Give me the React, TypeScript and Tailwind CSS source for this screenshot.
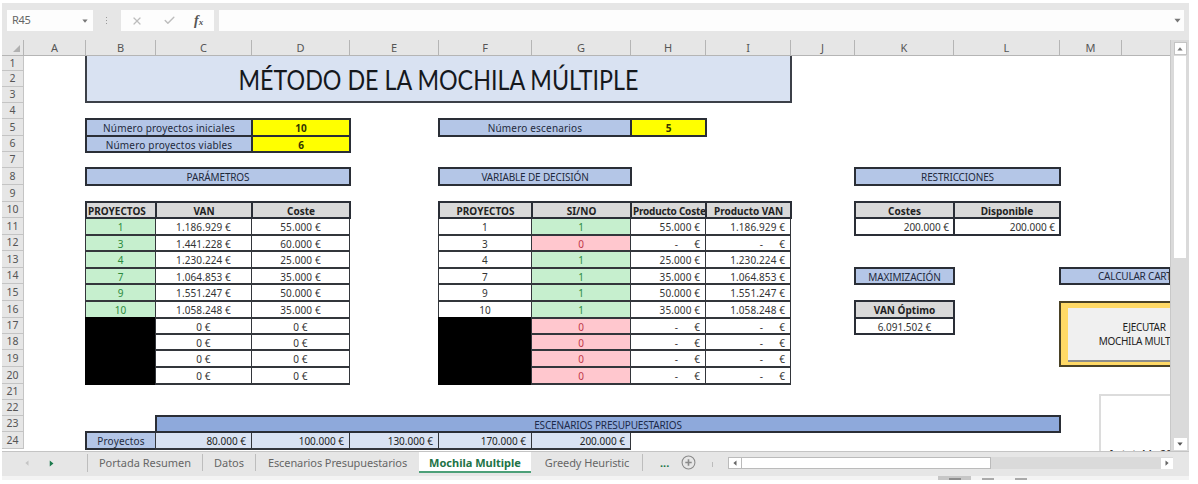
import { Check, X } from "lucide-react"
import type { ReactNode } from "react"

type Kind = "blue" | "caps" | "band" | "light" | "yellow" | "head" | "plain" | "data" | "green" | "red" | "black"

type CellData = {
  col: string
  row: number
  colSpan?: number
  kind: Kind
  text?: string
  align?: "left" | "center" | "right"
}

const thick = "outline-2 -outline-offset-1 outline-[#2a2e36]"
const thin = "-my-px -ml-px border-x border-y-2 border-[#33363b]"

const kinds: Record<Kind, string> = {
  blue: `bg-[#b4c6e7] text-[#1f2a3d] tracking-[.18px] ${thick}`,
  caps: `bg-[#b4c6e7] text-[#1f2a3d] tracking-[-.15px] ${thick}`,
  band: `bg-[#8ea9db] text-[#1c2a4a] tracking-[-.15px] ${thick}`,
  light: `bg-[#d9e2f2] text-[#222] ${thin}`,
  yellow: `bg-[#ffff00] font-bold text-[#333300] ${thick}`,
  head: `bg-[#d9d9d9] font-bold text-[#222] ${thick}`,
  plain: `bg-white text-[#333] ${thick}`,
  data: `bg-white text-[#333] tracking-[.1px] ${thin}`,
  green: `bg-[#c6efce] text-[#2c8a3c] ${thin}`,
  red: `bg-[#ffc7ce] text-[#c0384a] ${thin}`,
  black: "bg-black text-black outline-2 -outline-offset-1 outline-black",
}

const aligns = {
  left: "justify-start pl-[2px]",
  center: "justify-center",
  right: "justify-end pr-[5px]",
}

const columns = "ABCDEFGHIJKLM".split("")
const rows = Array.from({ length: 24 }, (_, i) => i + 1)

const projects = [
  ["1", "1.186.929 €", "55.000 €", "1"],
  ["3", "1.441.228 €", "60.000 €", "0"],
  ["4", "1.230.224 €", "25.000 €", "1"],
  ["7", "1.064.853 €", "35.000 €", "1"],
  ["9", "1.551.247 €", "50.000 €", "1"],
  ["10", "1.058.248 €", "35.000 €", "1"],
  ["", "0 €", "0 €", "0"],
  ["", "0 €", "0 €", "0"],
  ["", "0 €", "0 €", "0"],
  ["", "0 €", "0 €", "0"],
]

const cells: CellData[] = []

projects.forEach(([id, van, cost, chosen], i) => {
  const row = 11 + i
  cells.push(
    { col: "B", row, kind: id ? "green" : "black", text: id },
    { col: "C", row, kind: "data", text: van },
    { col: "D", row, kind: "data", text: cost },
    { col: "F", row, kind: id ? "data" : "black", text: id },
    { col: "G", row, kind: chosen === "1" ? "green" : "red", text: chosen },
    { col: "H", row, kind: "data", text: chosen === "1" ? cost : "-", align: "right" },
    { col: "I", row, kind: "data", text: chosen === "1" ? van : "-", align: "right" }
  )
})

cells.push(
  { col: "B", row: 5, colSpan: 2, kind: "blue", text: "Número proyectos iniciales" },
  { col: "D", row: 5, kind: "yellow", text: "10" },
  { col: "B", row: 6, colSpan: 2, kind: "blue", text: "Número proyectos viables" },
  { col: "D", row: 6, kind: "yellow", text: "6" },
  { col: "F", row: 5, colSpan: 2, kind: "blue", text: "Número escenarios" },
  { col: "H", row: 5, kind: "yellow", text: "5" },
  { col: "B", row: 8, colSpan: 3, kind: "caps", text: "PARÁMETROS" },
  { col: "F", row: 8, colSpan: 2, kind: "caps", text: "VARIABLE DE DECISIÓN" },
  { col: "K", row: 8, colSpan: 2, kind: "caps", text: "RESTRICCIONES" },
  { col: "B", row: 10, kind: "head", text: "PROYECTOS", align: "left" },
  { col: "C", row: 10, kind: "head", text: "VAN" },
  { col: "D", row: 10, kind: "head", text: "Coste" },
  { col: "F", row: 10, kind: "head", text: "PROYECTOS" },
  { col: "G", row: 10, kind: "head", text: "SI/NO" },
  { col: "H", row: 10, kind: "head", text: "Producto Coste", align: "left" },
  { col: "I", row: 10, kind: "head", text: "Producto VAN" },
  { col: "K", row: 10, kind: "head", text: "Costes" },
  { col: "L", row: 10, kind: "head", text: "Disponible" },
  { col: "K", row: 11, kind: "plain", text: "200.000 €", align: "right" },
  { col: "L", row: 11, kind: "plain", text: "200.000 €", align: "right" },
  { col: "K", row: 14, kind: "caps", text: "MAXIMIZACIÓN" },
  { col: "K", row: 16, kind: "head", text: "VAN Óptimo" },
  { col: "K", row: 17, kind: "plain", text: "6.091.502 €" },
  { col: "B", row: 24, kind: "blue", text: "Proyectos" },
  { col: "C", row: 24, kind: "light", text: "80.000 €", align: "right" },
  { col: "D", row: 24, kind: "light", text: "100.000 €", align: "right" },
  { col: "E", row: 24, kind: "light", text: "130.000 €", align: "right" },
  { col: "F", row: 24, kind: "light", text: "170.000 €", align: "right" },
  { col: "G", row: 24, kind: "light", text: "200.000 €", align: "right" },
  { col: "C", row: 23, colSpan: 10, kind: "band", text: "ESCENARIOS PRESUPUESTARIOS" }
)

// column 1 of the grid holds the row numbers, row 1 the column letters
function place(col: string, row: number, colSpan = 1, rowSpan = 1) {
  return {
    gridColumn: `${columns.indexOf(col) + 2} / span ${colSpan}`,
    gridRow: `${row + 1} / span ${rowSpan}`,
  }
}

function Cell({ cell }: { cell: CellData }) {
  return (
    <div
      className={`flex items-center pt-px leading-none whitespace-nowrap ${kinds[cell.kind]} ${aligns[cell.align || "center"]}`}
      style={place(cell.col, cell.row, cell.colSpan)}
    >
      {cell.text === "-" ? (
        <>
          <span className="mr-4">-</span>
          <span>€</span>
        </>
      ) : (
        <span className={cell.text === "Producto Coste" ? "tracking-[-.22px]" : ""}>{cell.text}</span>
      )}
    </div>
  )
}

function Arrow({ className }: { className: string }) {
  return (
    <svg viewBox="0 0 8 8" className={className} fill="currentColor">
      <path d="M0.5 2h7L4 6.2z" />
    </svg>
  )
}

function FormulaBar() {
  return (
    <div className="flex h-[37px] items-start pt-[7px] pl-[5px] text-[11px] text-[#666]">
      <div className="flex h-[21px] w-[86px] items-center justify-between bg-[#fdfdfd] pr-[5px] pl-[5px]">
        <span className="tracking-[-.3px]">R45</span>
        <Arrow className="size-[6px] text-[#777]" />
      </div>
      <div className="ml-[13px] flex h-[21px] flex-col justify-center gap-[2px]">
        <i className="size-px bg-[#999]" />
        <i className="size-px bg-[#999]" />
        <i className="size-px bg-[#999]" />
      </div>
      <div className="ml-[14px] flex h-[21px] w-[93px] items-center bg-[#fdfdfd] pl-[10px]">
        <X className="size-[12px] text-[#bdbdbd]" strokeWidth={2.4} />
        <Check className="ml-[20px] size-[13px] text-[#bdbdbd]" strokeWidth={2.6} />
        <span className="ml-[18px] font-['Liberation_Serif',serif] text-[14px] leading-none font-bold text-[#555] italic">
          f<span className="text-[9px]">x</span>
        </span>
      </div>
      <div className="ml-[5px] flex h-[21px] w-[965px] items-center justify-end bg-[#fdfdfd] pr-[3px]">
        <Arrow className="size-[7px] text-[#777]" />
      </div>
    </div>
  )
}

function Sheet() {
  return (
    <div className="grid h-[411px] w-[1168px] grid-cols-[22px_62px_70px_96px_98px_89px_93px_99px_75px_85px_64px_99px_106px_62px_48px] grid-rows-[16px_15px_16px_16px_16px_17px_16px_16px_17px_17px_16px_17px_16px_17px_16px_17px_17px_16px_16px_17px_17px_16px_16px_16px_17px_2px] overflow-hidden bg-white text-[10px]">
      <div className="col-start-1 row-start-1 flex items-end justify-end border-r border-b border-[#b5b5b5] bg-[#e6e6e6] pr-[3px] pb-[3px]">
        <svg viewBox="0 0 8 8" className="size-[7px] text-[#b0b0b0]" fill="currentColor">
          <path d="M8 0v8H0z" />
        </svg>
      </div>
      {columns.map((c) => (
        <div
          key={c}
          className="flex items-center justify-center border-r border-b border-[#b5b5b5] bg-[#e6e6e6] text-[11px] leading-none text-[#555]"
          style={place(c, 0)}
        >
          {c}
        </div>
      ))}
      <div className="col-start-15 row-start-1 border-b border-[#b5b5b5] bg-[#e6e6e6]" />
      {rows.map((r) => (
        <div
          key={r}
          className="col-start-1 flex items-center justify-center border-r border-b border-[#c4c4c4] bg-[#e6e6e6] text-[10.5px] leading-none text-[#555]"
          style={{ gridRow: r + 1 }}
        >
          {r}
        </div>
      ))}

      <div
        className="-mr-px -ml-px flex items-center justify-center border-2 border-t-0 border-[#3c4048] bg-[#d9e2f2] pt-[3px] text-[26px] whitespace-nowrap text-[#15181d]"
        style={place("B", 1, 8, 3)}
      >
        <span className="scale-x-[.895] font-['Lato',sans-serif]">MÉTODO DE LA MOCHILA MÚLTIPLE</span>
      </div>

      {cells.map((cell) => (
        <Cell key={cell.col + cell.row} cell={cell} />
      ))}

      <div
        className="flex items-center bg-[#b4c6e7] pl-[38px] leading-none tracking-[-.2px] whitespace-nowrap text-[#1f2a3d] outline-2 -outline-offset-1 outline-[#2a2e36]"
        style={place("M", 14, 2)}
      >
        CALCULAR CARTERA
      </div>
      <div
        className="-ml-px overflow-hidden border-2 border-r-0 border-[#4a4226] bg-[#ffd966] pt-[5px] pl-[7px]"
        style={place("M", 16, 2, 4)}
      >
        <div className="flex h-[54px] w-[160px] flex-col items-center justify-center border-b-2 border-[#8c8c8c] bg-[#f0f0f0] pr-[8px] text-[10px] leading-[14px] tracking-[-.3px] whitespace-nowrap text-[#222]">
          <span>EJECUTAR</span>
          <span>MOCHILA MULTIPLE</span>
        </div>
      </div>
      <div
        className="mt-[-6px] ml-[39px] overflow-hidden border-t-2 border-l-2 border-[#dcdcdc] bg-white pt-[53px] pl-[7px] text-[10px] leading-none font-bold whitespace-nowrap text-[#333]"
        style={place("M", 22, 2, 4)}
      >
        Autotabla 200
      </div>
    </div>
  )
}

function VerticalScroll() {
  return (
    <div className="flex h-[411px] w-[19px] flex-col items-center border-l border-[#c8c8c8] bg-[#dadada]">
      <div className="mt-[2px] flex h-[13px] w-[13px] items-center justify-center border border-[#c4c4c4] bg-white">
        <Arrow className="size-[6px] rotate-180 text-[#777]" />
      </div>
      <div className="mt-px h-[202px] w-[12px] bg-white" />
      <div className="mt-auto mb-px flex h-[12px] w-[13px] items-center justify-center bg-white">
        <Arrow className="size-[6px] text-[#555]" />
      </div>
    </div>
  )
}

function Tab({ className, children }: { className: string; children: ReactNode }) {
  return (
    <div className={`flex h-[17px] items-center justify-center border-r border-[#bdbdbd] ${className}`}>
      {children}
    </div>
  )
}

function TabBar() {
  return (
    <div className="flex h-[25px] items-start border-t border-[#c4c4c4] bg-[#e6e6e6] pt-[2px] text-[11px] leading-none whitespace-nowrap text-[#666]">
      <div className="flex h-[18px] w-[86px] items-center border-r border-[#bdbdbd] pl-[22px]">
        <Arrow className="size-[6px] rotate-90 text-[#c4c4c4]" />
        <Arrow className="ml-[18px] size-[7px] -rotate-90 text-[#1b7a4c]" />
      </div>
      <Tab className="w-[115px]">Portada Resumen</Tab>
      <Tab className="w-[53px]">Datos</Tab>
      <Tab className="w-[163px] border-r-0 tracking-[-.1px]">Escenarios Presupuestarios</Tab>
      <div className="mt-[-2px] mr-px flex h-[21px] w-[112px] items-center justify-center border-b-2 border-[#4da079] bg-white pt-px font-bold text-[#217346]">
        Mochila Multiple
      </div>
      <Tab className="w-[111px] tracking-[-.1px]">Greedy Heuristic</Tab>
      <span className="mt-[3px] ml-[17px] w-[12px] font-bold text-[#217346]">...</span>
      <svg viewBox="0 0 14 14" className="mt-px ml-[9px] size-[15px]" fill="none" stroke="#8a8a8a">
        <circle cx="7" cy="7" r="6" />
        <path d="M4 7h6M7 4v6" strokeWidth="1.5" />
      </svg>
      <i className="mt-[8px] ml-[16px] h-[5px] w-px bg-[#bbb]" />
      <div className="mt-[3px] ml-[15px] flex h-[12px] w-[445px] items-center justify-between bg-[#dadada]">
        <div className="flex h-[12px] w-[263px] items-center border border-[#bbb] bg-white">
          <span className="flex h-full w-[13px] items-center justify-center border-r border-[#bbb]">
            <Arrow className="size-[6px] rotate-90 text-[#666]" />
          </span>
        </div>
        <div className="flex h-[11px] w-[12px] items-center justify-center bg-white">
          <Arrow className="size-[6px] -rotate-90 text-[#666]" />
        </div>
      </div>
    </div>
  )
}

export default function App() {
  return (
    <div className="h-[484px] w-[1198px] overflow-hidden bg-white pt-[3px] pl-[2px] font-['Noto_Sans',sans-serif]">
      <div className="w-[1187px] bg-[#e6e6e6]">
        <FormulaBar />
        <div className="flex">
          <Sheet />
          <VerticalScroll />
        </div>
        <TabBar />
        <div className="flex h-[4px] items-start bg-[#f3f3f3] pl-[936px]">
          <i className="flex h-[4px] w-[33px] justify-center bg-[#c6c6c6]">
            <i className="mt-[2px] h-[2px] w-[12px] bg-[#8d8d8d]" />
          </i>
          <i className="mt-[2px] ml-[11px] h-[2px] w-[12px] bg-[#aaa]" />
          <i className="mt-[2px] ml-[21px] h-[2px] w-[12px] bg-[#aaa]" />
        </div>
      </div>
    </div>
  )
}
